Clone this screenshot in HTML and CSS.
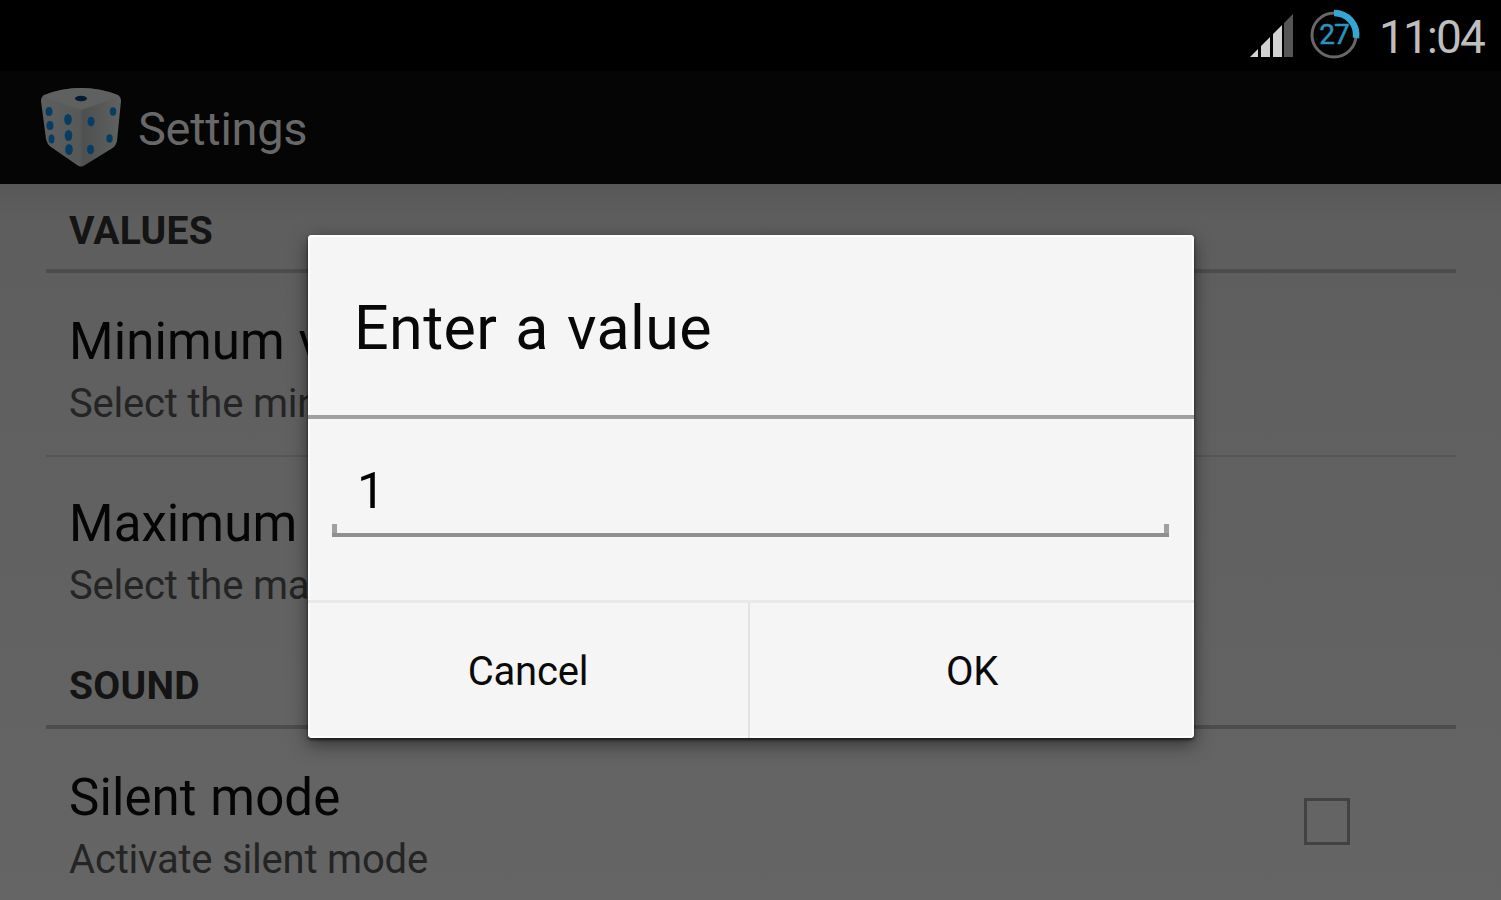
FILE: index.html
```
<!DOCTYPE html>
<html lang="en">
<head>
    <meta charset="UTF-8">
    <meta name="viewport" content="width=device-width, initial-scale=1.0">
    <title>Settings</title>
    <link rel="stylesheet" href="styles.css">
</head>
<body>
    <div class="status-bar">
        <svg class="signal" width="46" height="46" viewBox="0 0 46 46">
            <path d="M1 44 L9 36 V44Z M12 44 V33 L21 24 V44Z M24 44 V21 L33 12 V44Z" fill="#d2d2d2"/>
            <path d="M35 44 V10 L44 1 V44Z" fill="#555"/>
        </svg>
        <svg class="battery" width="52" height="52" viewBox="0 0 52 52">
            <circle cx="25" cy="27" r="22" fill="none" stroke="#6b6666" stroke-width="3"/>
            <path d="M25 5 A22 22 0 0 1 47 30" fill="none" stroke="#35a5d3" stroke-width="6.5"/>
            <text class="battery-level" x="25" y="36" text-anchor="middle">27</text>
        </svg>
        <span class="clock">11:04</span>
    </div>

    <header class="action-bar">
        <svg class="dice" width="84" height="84" viewBox="0 0 84 84">
            <defs>
                <linearGradient id="die-body" x1="0" y1="0" x2="1" y2="0">
                    <stop offset="0" stop-color="#5d5f5e"/>
                    <stop offset="0.48" stop-color="#575959"/>
                    <stop offset="0.53" stop-color="#4d504e"/>
                    <stop offset="1" stop-color="#606262"/>
                </linearGradient>
            </defs>
            <path d="M5 9 Q22 2 42 2 Q62 2 79 9 Q82 11 82 15 L78 55 Q77 60 72 63 L46 79 Q42 82 38 79 L12 61 Q8 58 7 53 L2 15 Q2 11 5 9Z" fill="url(#die-body)"/>
            <path d="M4 10 Q22 2 42 2 Q62 2 80 10 Q64 17 42 24 Q20 17 4 10Z" fill="#5f6161"/>
            <g fill="#083d63">
                <ellipse cx="42" cy="12.5" rx="6" ry="2.8" fill="#061a34"/>
                <ellipse cx="10" cy="25.5" rx="3.5" ry="4.5"/>
                <ellipse cx="11" cy="39.5" rx="3.5" ry="4.5"/>
                <ellipse cx="12.5" cy="53" rx="3" ry="4.5"/>
                <ellipse cx="29" cy="33.5" rx="3.8" ry="5.5"/>
                <ellipse cx="29.5" cy="49.5" rx="3.8" ry="5.5"/>
                <ellipse cx="30" cy="63.5" rx="3.8" ry="5.5"/>
                <ellipse cx="52" cy="35.5" rx="3.5" ry="4.8"/>
                <ellipse cx="51.5" cy="63.5" rx="3.5" ry="4.8"/>
                <ellipse cx="74" cy="25.5" rx="3.2" ry="4.2"/>
                <ellipse cx="70.5" cy="52.5" rx="3.2" ry="4.2"/>
            </g>
        </svg>
        <h1 class="screen-title">Settings</h1>
    </header>

    <main class="preferences">
        <section class="category">
            <h2 class="category-title">VALUES</h2>
            <div class="preference">
                <div class="preference-text">
                    <div class="preference-title">Minimum v</div>
                    <div class="preference-summary">Select the min</div>
                </div>
            </div>
            <div class="preference">
                <div class="preference-text">
                    <div class="preference-title">Maximum</div>
                    <div class="preference-summary">Select the ma</div>
                </div>
            </div>
        </section>
        <section class="category">
            <h2 class="category-title">SOUND</h2>
            <div class="preference">
                <div class="preference-text">
                    <div class="preference-title">Silent mode</div>
                    <div class="preference-summary">Activate silent mode</div>
                </div>
                <div class="checkbox"></div>
            </div>
        </section>
    </main>

    <div class="dialog">
        <h2 class="dialog-title">Enter a value</h2>
        <div class="dialog-body">
            <div class="field">
                <input class="field-input" type="text" value="1">
            </div>
        </div>
        <div class="dialog-buttons">
            <button class="dialog-button">Cancel</button>
            <button class="dialog-button">OK</button>
        </div>
    </div>
</body>
</html>
```
FILE: styles.css
```
* {
    margin: 0;
    padding: 0;
    box-sizing: border-box;
    font-family: Roboto, "Liberation Sans", sans-serif;
}

body {
    height: 900px;
    overflow: hidden;
    display: flex;
    flex-direction: column;
    background: #000;
}

/* Status bar */
.status-bar {
    flex: none;
    height: 71px;
    padding: 0 17px 0 0;
    display: flex;
    justify-content: flex-end;
    background: #000;
}

.signal {
    margin: 13px 14px 0 0;
}

.battery {
    margin: 8px 18px 0 0;
}

.battery-level {
    font-size: 28px;
    letter-spacing: -1px;
    fill: #2b93be;
    stroke: #2b93be;
    stroke-width: 0.5px;
}

.clock {
    font-size: 46px;
    line-height: 75px;
    letter-spacing: -1.9px;
    color: #bebebe;
}

/* Action bar */
.action-bar {
    flex: none;
    height: 113px;
    padding: 0 39px;
    display: flex;
    align-items: flex-start;
    background: #050505;
}

.dice {
    margin: 15px 15px 0 0;
}

.screen-title {
    font-size: 47px;
    font-weight: 400;
    line-height: 116px;
    letter-spacing: -0.3px;
    color: #686868;
}

/* Preference list */
.preferences {
    flex: 1;
    padding: 0 45px 0 46px;
    background: linear-gradient(#585858, #5e5e5e 40px, #656565);
}

.category-title {
    padding: 19px 23px 10px;
    border-bottom: 4px solid #4d4d4d;
    font-size: 39px;
    font-weight: 700;
    line-height: 56px;
    letter-spacing: 0.3px;
    color: #141414;
}

.category + .category .category-title {
    padding-top: 21px;
    padding-bottom: 11px;
}

.preference {
    display: flex;
    align-items: center;
    padding: 35px 23px 23px;
}

.preference + .preference {
    padding-top: 33px;
    border-top: 2px solid #555;
}

.preference-text {
    flex: 1;
}

.preference-title {
    font-size: 51px;
    line-height: 68px;
    letter-spacing: 0.1px;
    word-spacing: 1px;
    color: #050505;
}

.preference-summary {
    font-size: 40px;
    line-height: 56px;
    letter-spacing: -0.2px;
    color: #242424;
}

.checkbox {
    width: 46px;
    height: 47px;
    margin: -10px 83px 0 0;
    border: 3px solid #424242;
}

/* Dialog */
.dialog {
    position: absolute;
    left: 308px;
    top: 235px;
    width: 886px;
    height: 503px;
    display: flex;
    flex-direction: column;
    background: #f5f5f5;
    border-radius: 4px;
    box-shadow:
        inset 0 0 0 2px #fdfdfd,
        0 2px 3px rgba(0, 0, 0, 0.6),
        0 6px 18px rgba(0, 0, 0, 0.5);
}

.dialog-title {
    height: 184px;
    padding-left: 46px;
    border-bottom: 4px solid #a0a0a0;
    font-size: 61px;
    font-weight: 400;
    line-height: 186px;
    letter-spacing: 0.4px;
    word-spacing: 2.5px;
    color: #080808;
}

.dialog-body {
    flex: 1;
    padding: 24px 25px 0 24px;
}

.field {
    height: 94px;
    padding-bottom: 4px;
    background:
        linear-gradient(#8f8f8f, #8f8f8f) left bottom / 100% 4px no-repeat,
        linear-gradient(#a0a0a0, #a0a0a0) left bottom / 5px 13px no-repeat,
        linear-gradient(#a0a0a0, #a0a0a0) right bottom / 5px 13px no-repeat;
}

.field-input {
    width: 100%;
    height: 90px;
    padding: 6px 25px 0;
    border: none;
    outline: none;
    background: transparent;
    font-size: 50px;
    color: #000;
}

.dialog-buttons {
    display: flex;
    height: 138px;
    padding-right: 2px;
    border-top: 3px solid #e9e9e9;
}

.dialog-button {
    flex: 1;
    padding: 2px 0 0;
    border: none;
    background: transparent;
    font-size: 40px;
    letter-spacing: -0.2px;
    color: #0a0a0a;
}

.dialog-button + .dialog-button {
    padding-left: 2px;
    border-left: 2px solid #e2e2e2;
}
```
